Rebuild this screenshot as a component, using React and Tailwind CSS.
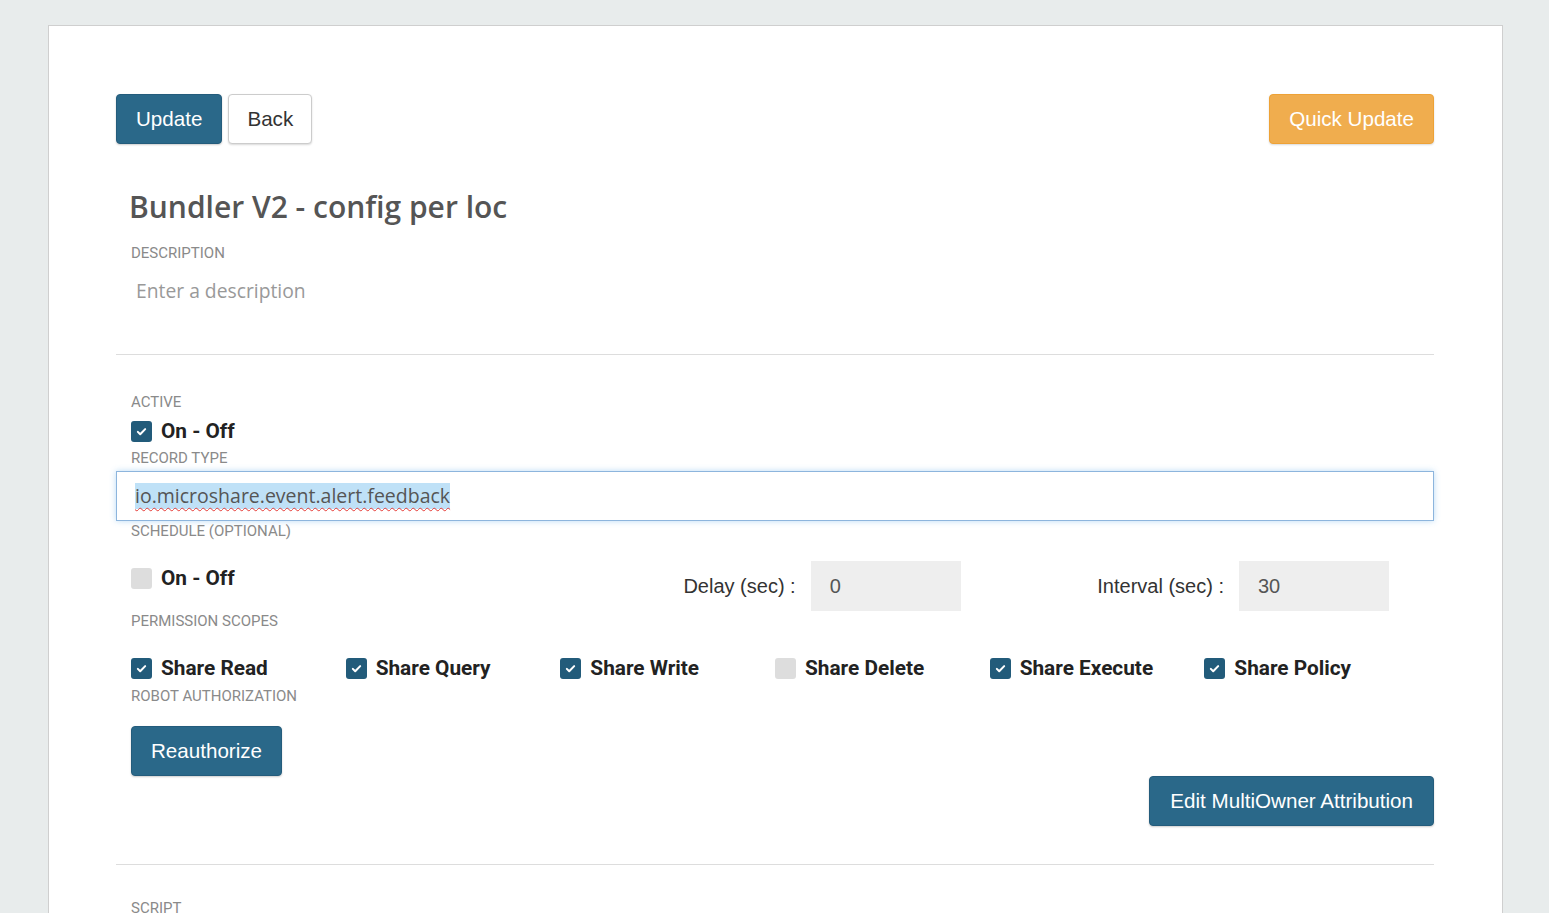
import React from 'react';

const label = "block text-[15px] leading-[20px] uppercase text-[#8a8a8a] font-['Roboto',sans-serif]";
const btnBlue =
  "inline-flex h-[50px] items-center rounded-[4px] border border-[#245c7c] bg-[#2a6889] px-[19px] text-[20.6px] text-white shadow-[0_1px_2px_rgba(0,0,0,0.2)] font-['Liberation_Sans',Arial,sans-serif]";

const Check = ({ checked, text }) => (
  <div className="flex h-[22px] items-center gap-[9px]">
    <span
      className={
        checked
          ? 'flex h-[21px] w-[21px] items-center justify-center rounded-[3px] bg-[#225b7a]'
          : 'flex h-[21px] w-[21px] items-center justify-center rounded-[3px] bg-[#dddddd]'
      }
    >
      {checked && (
        <svg width="11" height="11" viewBox="0 0 12 12" fill="none">
          <path d="M2 6.4l2.6 2.6L10 3.4" stroke="white" strokeWidth="2.2" strokeLinecap="round" strokeLinejoin="round" />
        </svg>
      )}
    </span>
    <span className="text-[20.8px] font-bold leading-[22px] text-[#222] font-['Roboto',sans-serif]">{text}</span>
  </div>
);

const scopes = [
  ['Share Read', true],
  ['Share Query', true],
  ['Share Write', true],
  ['Share Delete', false],
  ['Share Execute', true],
  ['Share Policy', true],
];

export default function App() {
  return (
    <div className="min-h-[913px] bg-[#e8ecec] pt-[25px]">
      <div className="ml-[48px] w-[1455px] border border-[#cfcfcf] bg-white pl-[67px] pr-[68px] pt-[68px] pb-[20px]">
        {/* toolbar */}
        <div className="flex items-center justify-between">
          <div className="flex gap-[6px]">
            <button className={btnBlue}>Update</button>
            <button className="inline-flex h-[50px] items-center rounded-[4px] border border-[#cccccc] bg-white px-[18px] text-[20.6px] text-[#333] shadow-[0_1px_2px_rgba(0,0,0,0.15)] font-['Liberation_Sans',Arial,sans-serif]">
              Back
            </button>
          </div>
          <button className="inline-flex h-[50px] items-center rounded-[4px] border border-[#eea236] bg-[#f0ad4e] px-[19px] text-[20.6px] text-white shadow-[0_1px_2px_rgba(0,0,0,0.15)] font-['Liberation_Sans',Arial,sans-serif]">
            Quick Update
          </button>
        </div>

        {/* title + description */}
        <div className="px-[14px]">
          <h1 className="mt-[46px] -ml-[1px] text-[30px] font-semibold leading-[33px] text-[#555] font-['Open_Sans',sans-serif]">
            Bundler V2 - config per loc
          </h1>
          <span className={label + ' mt-[20px] pl-[1px]'}>Description</span>
          <p className="mt-[14px] pl-[6px] text-[19.3px] leading-[28px] text-[#999] font-['Open_Sans',sans-serif]">
            Enter a description
          </p>
        </div>

        <hr className="mt-[49px] border-0 border-t border-[#dddddd]" />

        <div className="px-[15px]">
          <span className={label + ' mt-[37px]'}>Active</span>
          <div className="mt-[8px]">
            <Check checked text="On - Off" />
          </div>
          <span className={label + ' mt-[6px]'}>Record type</span>
        </div>

        <div className="mt-[3px] flex h-[50px] items-center border border-[#8db5dd] pl-[18px] shadow-[0_0_6px_rgba(102,175,233,0.45)]">
          <span className="bg-[#bfe1f7] text-[19.5px] leading-[26px] text-[#555] underline decoration-wavy decoration-[#e53935] decoration-1 underline-offset-[4px] font-['Open_Sans',sans-serif]">
            io.microshare.event.alert.feedback
          </span>
        </div>

        <div className="px-[15px]">
          <span className={label}>Schedule (optional)</span>
          <div className="mt-[20px] grid h-[50px] grid-cols-3">
            <div className="pt-[6px]">
              <Check checked={false} text="On - Off" />
            </div>
            <div className="flex items-center justify-end gap-[15px] pr-[29px] text-[20px] text-[#333] font-['Liberation_Sans',Arial,sans-serif]">
              <span>Delay (sec) :</span>
              <div className="flex h-[50px] w-[150px] items-center bg-[#eeeeee] pl-[19px] text-[#555]">0</div>
            </div>
            <div className="flex items-center justify-end gap-[15px] pr-[30px] text-[20px] text-[#333] font-['Liberation_Sans',Arial,sans-serif]">
              <span>Interval (sec) :</span>
              <div className="flex h-[50px] w-[150px] items-center bg-[#eeeeee] pl-[19px] text-[#555]">30</div>
            </div>
          </div>

          <span className={label}>Permission scopes</span>
          <div className="mt-[26px] grid grid-cols-6">
            {scopes.map(([t, c]) => (
              <Check key={t} checked={c} text={t} />
            ))}
          </div>
          <span className={label + ' mt-[7px]'}>Robot authorization</span>
          <div className="mt-[20px]">
            <button className={btnBlue}>Reauthorize</button>
          </div>
        </div>

        <div className="flex justify-end">
          <button className={btnBlue + ' !px-[20px]'}>Edit MultiOwner Attribution</button>
        </div>

        <hr className="mt-[38px] border-0 border-t border-[#dddddd]" />

        <div className="px-[15px]">
          <span className={label + ' mt-[33px]'}>Script</span>
        </div>
      </div>
    </div>
  );
}
